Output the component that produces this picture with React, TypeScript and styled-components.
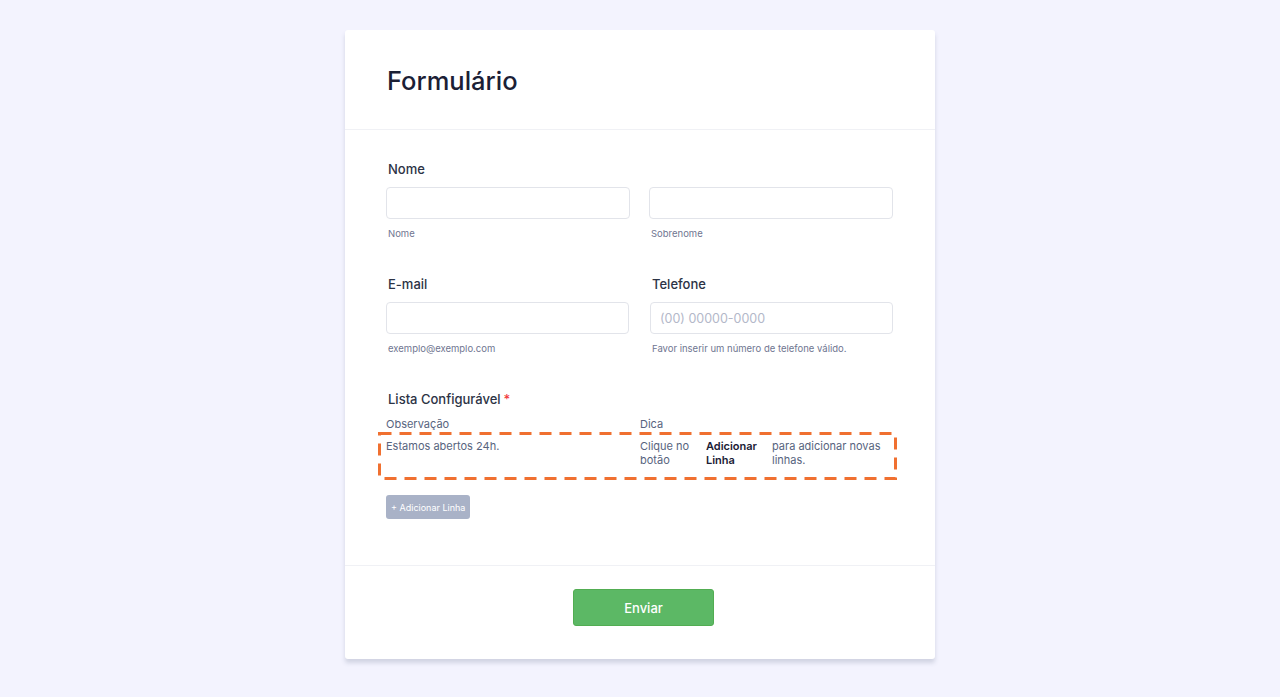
import React from 'react'
import styled, { createGlobalStyle } from 'styled-components'

const GlobalStyle = createGlobalStyle`
  html, body {
    margin: 0;
    padding: 0;
    background: #f3f3fe;
    font-family: Inter, "Noto Sans", Arial, sans-serif;
    color: #2c3345;
  }
`;

const Page = styled.div`
  min-height: 697px;
  padding: 30px 0 40px;
  box-sizing: border-box;
`;

const Card = styled.form`
  width: 590px;
  margin: 0 auto;
  background: #fff;
  border-radius: 3px;
  box-shadow: 0 4px 4px rgba(87, 100, 126, 0.21);
`;

const Header = styled.div`
  height: 100px;
  padding: 0 42px;
  display: flex;
  align-items: center;
  border-bottom: 1px solid #f0f1f5;
  box-sizing: border-box;
`;

const Title = styled.h1`
  margin: 0;
  padding-top: 1px;
  font-size: 25.5px;
  font-weight: 500;
  color: #1b2035;
`;

const Body = styled.div`
  padding: 30px 42px 46px 41px;
  display: flex;
  flex-direction: column;
  border-bottom: 1px solid #f0f1f5;
`;

const Section = styled.div<{ $gap?: number }>`
  margin-bottom: ${p => p.$gap ?? 0}px;
`;

const Label = styled.div`
  font-size: 13px;
  line-height: 18px;
  font-weight: 500;
  color: #2c3345;
  padding-left: 2px;
`;

const Required = styled.span`
  color: #f23a3c;
  margin-left: 3px;
`;

const Row = styled.div<{ $gap?: number }>`
  display: grid;
  grid-template-columns: 1fr 1fr;
  column-gap: ${p => p.$gap ?? 20}px;
`;

const Field = styled.div`
  display: flex;
  flex-direction: column;
`;

const Input = styled.input`
  box-sizing: border-box;
  height: 32px;
  width: 100%;
  margin-top: 9px;
  border: 1px solid #e2e4ea;
  border-radius: 4px;
  padding: 0 9px;
  font-family: inherit;
  font-size: 12.5px;
  color: #2c3345;
  outline: none;
  &::placeholder {
    color: #b3b8c9;
  }
`;

const SubLabel = styled.div`
  margin-top: 9px;
  font-size: 9.5px;
  line-height: 12px;
  color: #6f7691;
  padding-left: 2px;
`;

const TableHead = styled.div`
  display: grid;
  grid-template-columns: 254px 1fr;
  margin-top: 8px;
  font-size: 11px;
  line-height: 16px;
  color: #57647e;
`;

const TableRow = styled.div`
  position: relative;
  display: grid;
  grid-template-columns: 254px 1fr;
  padding: 7px 0 13px;
  font-size: 11px;
  line-height: 14px;
  color: #57647e;
`;

const Highlight = styled.svg`
  position: absolute;
  left: -8px;
  top: 0;
  width: calc(100% + 12px);
  height: 100%;
  overflow: visible;
  pointer-events: none;
`;

const Hint = styled.div`
  display: grid;
  grid-template-columns: 54px 54px 1fr;
  column-gap: 12px;
`;

const Strong = styled.span`
  font-weight: 600;
  color: #1b2035;
`;

const AddButton = styled.button`
  align-self: flex-start;
  margin-top: 15px;
  height: 24px;
  padding: 0 5px;
  border: none;
  border-radius: 3px;
  background: #a9b2c7;
  color: #fff;
  font-family: inherit;
  font-size: 9px;
`;

const Footer = styled.div`
  display: flex;
  justify-content: center;
  padding: 23px 0 33px 7px;
`;

const Submit = styled.button`
  width: 141px;
  height: 37px;
  border: 1px solid #52ad52;
  border-radius: 3px;
  background: #5cb865;
  color: #fff;
  font-family: inherit;
  font-size: 13px;
  font-weight: 500;
`;

export default function App() {
  return (
    <>
      <GlobalStyle />
      <Page>
        <Card onSubmit={e => e.preventDefault()}>
          <Header>
            <Title>Formulário</Title>
          </Header>
          <Body>
            <Section $gap={35}>
              <Label>Nome</Label>
              <Row $gap={19}>
                <Field>
                  <Input />
                  <SubLabel>Nome</SubLabel>
                </Field>
                <Field>
                  <Input />
                  <SubLabel>Sobrenome</SubLabel>
                </Field>
              </Row>
            </Section>
            <Section $gap={35}>
              <Row $gap={21}>
                <Field>
                  <Label>E-mail</Label>
                  <Input />
                  <SubLabel>exemplo@exemplo.com</SubLabel>
                </Field>
                <Field>
                  <Label>Telefone</Label>
                  <Input placeholder="(00) 00000-0000" />
                  <SubLabel>Favor inserir um número de telefone válido.</SubLabel>
                </Field>
              </Row>
            </Section>
            <Section>
              <Label>
                Lista Configurável<Required>*</Required>
              </Label>
              <TableHead>
                <span>Observação</span>
                <span>Dica</span>
              </TableHead>
              <TableRow>
                <span>Estamos abertos 24h.</span>
                <Hint>
                  <span>Clique no botão</span>
                  <Strong>Adicionar Linha</Strong>
                  <span>para adicionar novas linhas.</span>
                </Hint>
                <Highlight>
                  <rect
                    x="1.5"
                    y="1.5"
                    fill="none"
                    stroke="#f07030"
                    strokeWidth="3"
                    strokeDasharray="12 8"
                    style={{ width: 'calc(100% - 3px)', height: 'calc(100% - 3px)' }}
                  />
                </Highlight>
              </TableRow>
            </Section>
            <AddButton type="button">+ Adicionar Linha</AddButton>
          </Body>
          <Footer>
            <Submit type="submit">Enviar</Submit>
          </Footer>
        </Card>
      </Page>
    </>
  )
}
